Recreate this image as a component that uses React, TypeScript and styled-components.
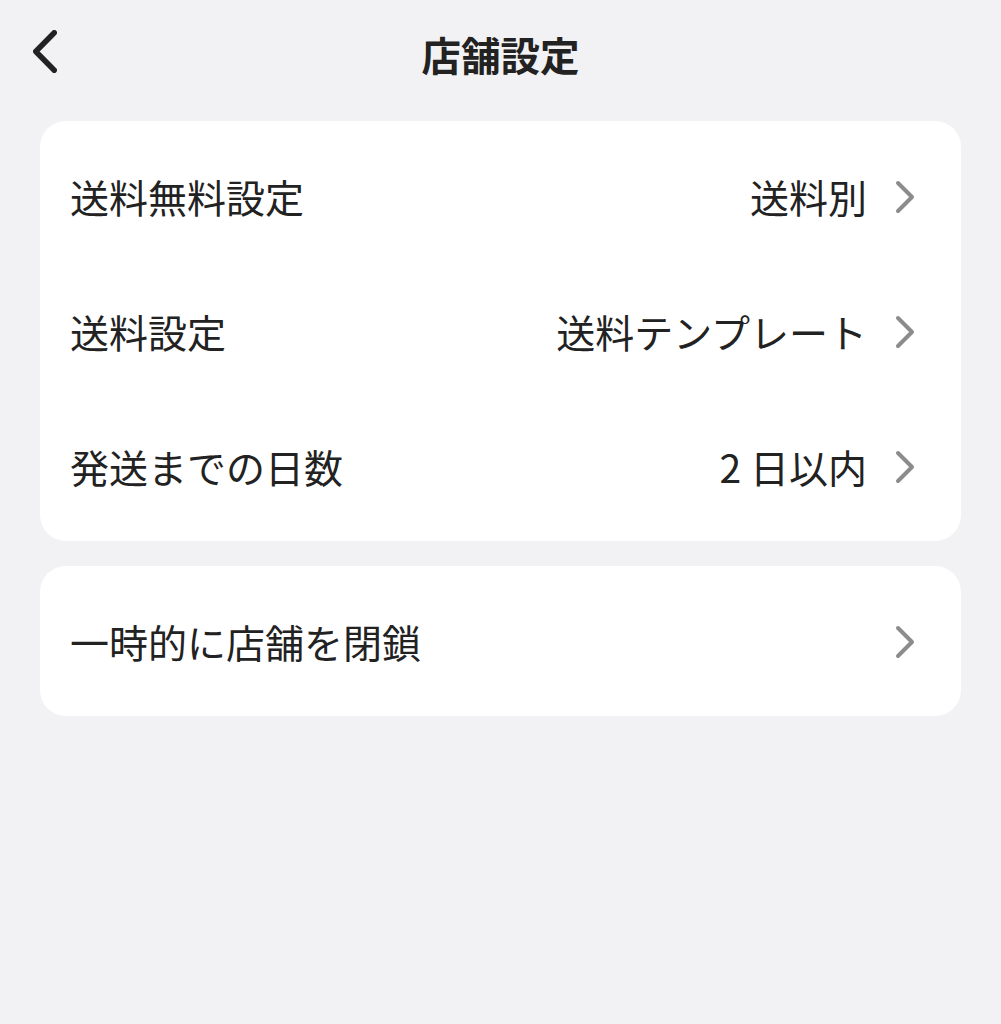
import React from 'react';
import styled, {createGlobalStyle} from "styled-components";

const GlobalStyle = createGlobalStyle`
    html, body {
        margin: 0;
        padding: 0;
        background: #f2f2f4;
        font-family: "Noto Sans CJK JP", "Noto Sans", sans-serif;
        color: #222;
    }
`

type Item = { label: string, value?: string }

const shippingItems: Item[] = [
    {label: "送料無料設定", value: "送料別"},
    {label: "送料設定", value: "送料テンプレート"},
    {label: "発送までの日数", value: "2 日以内"},
]

const shopItems: Item[] = [
    {label: "一時的に店舗を閉鎖"},
]

const Chevron = ({color, width, height, stroke}: { color: string, width: number, height: number, stroke: number }) => (
    <svg width={width} height={height} viewBox={`0 0 ${width} ${height}`} fill="none">
        <path d={`M${stroke / 2 + 1} ${stroke / 2 + 1} L${width - stroke / 2 - 1} ${height / 2} L${stroke / 2 + 1} ${height - stroke / 2 - 1}`}
              stroke={color} strokeWidth={stroke} strokeLinecap="round" strokeLinejoin="round"/>
    </svg>
)

const SettingsCard = ({items}: { items: Item[] }) => (
    <Card>
        {items.map(item => (
            <Row key={item.label}>
                <Label>{item.label}</Label>
                <RightPart>
                    {item.value && <Value>{item.value}</Value>}
                    <Chevron color={"#8c8c8c"} width={20} height={34} stroke={4}/>
                </RightPart>
            </Row>
        ))}
    </Card>
)

export default function App() {
    return (
        <Page>
            <GlobalStyle/>
            <Header>
                <BackButton>
                    <BackIcon><Chevron color={"#222"} width={26} height={45} stroke={5.5}/></BackIcon>
                </BackButton>
                <Title>店舗設定</Title>
            </Header>
            <Content>
                <SettingsCard items={shippingItems}/>
                <SettingsCard items={shopItems}/>
            </Content>
        </Page>
    );
}

const Page = styled.div`
    width: 1001px;
    min-height: 1024px;
    background: #f2f2f4;
`
const Header = styled.header`
    height: 121px;
    display: flex;
    align-items: flex-start;
    justify-content: center;
    position: relative;
`
const BackButton = styled.button`
    position: absolute;
    left: 32px;
    top: 29px;
    border: none;
    background: none;
    padding: 0;
    display: flex;
`
const BackIcon = styled.span`
    display: flex;
    transform: scaleX(-1);
`
const Title = styled.h1`
    margin: 28px 0 0;
    font-size: 39.5px;
    line-height: 52px;
    font-weight: 700;
    color: #222;
`
const Content = styled.main`
    display: flex;
    flex-direction: column;
    gap: 25px;
    padding: 0 40px;
`
const Card = styled.section`
    background: #fff;
    border-radius: 26px;
    padding: 8px 0 7px;
`
const Row = styled.div`
    height: 135px;
    display: flex;
    align-items: center;
    justify-content: space-between;
    padding: 0 46px 0 30px;
`
const Label = styled.span`
    font-size: 39px;
    line-height: 1;
    color: #222;
`
const RightPart = styled.div`
    display: flex;
    align-items: center;
    gap: 28px;
`
const Value = styled.span`
    font-size: 39px;
    line-height: 1;
    color: #222;
`
